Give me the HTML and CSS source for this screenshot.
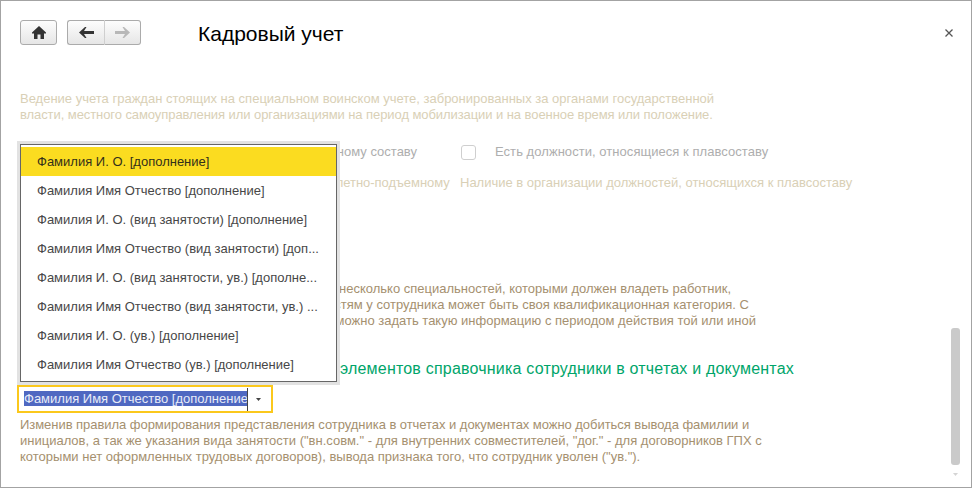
FILE: index.html
```html
<!DOCTYPE html>
<html lang="ru">
<head>
<meta charset="utf-8">
<title>Кадровый учет</title>
<link rel="stylesheet" href="styles.css">
</head>
<body>
<div class="window">
  <header class="header">
    <button class="btn btn-home" type="button" aria-label="Главная">
      <svg width="14" height="13" viewBox="0 0 14 13"><path d="M7 0 L14 6.5 V7.5 H12 V13 H8.5 V8.5 H5.5 V13 H2 V7.5 H0 V6.5 Z" fill="#333"/></svg>
    </button>
    <div class="btn-group">
      <button class="btn btn-nav" type="button" aria-label="Назад">
        <svg width="15" height="11" viewBox="0 0 15 11"><path d="M6 0 H7.5 L5 4 H15 V7 H5 L7.5 11 H6 L0 5.5 Z" fill="#333"/></svg>
      </button>
      <button class="btn btn-nav" type="button" aria-label="Вперёд">
        <svg width="15" height="11" viewBox="0 0 15 11"><path d="M9 0 H7.5 L10 4 H0 V7 H10 L7.5 11 H9 L15 5.5 Z" fill="#b8b8b8"/></svg>
      </button>
    </div>
    <h1 class="title">Кадровый учет</h1>
    <svg class="close" width="8" height="8" viewBox="0 0 8 8"><path d="M0.5 0.5 L7.5 7.5 M7.5 0.5 L0.5 7.5" stroke="#555" stroke-width="1.3" fill="none"/></svg>
  </header>

  <main class="content">
    <p class="faded intro">Ведение учета граждан стоящих на специальном воинском учете, забронированных за органами государственной<br><span class="tight-a">власти, местного самоуправления или организациями на период мобилизации и на военное время или положение.</span></p>

    <div class="opt-row">
      <div class="opt-label opt-left">Есть должности, относящиеся к летному составу</div>
      <span class="checkbox"></span>
      <div class="opt-label wide-a">Есть должности, относящиеся к плавсоставу</div>
    </div>
    <div class="desc-row">
      <div class="faded desc-left">Наличие в организации должностей, относящихся к летно-подъемному</div>
      <div class="faded">Наличие в организации должностей, относящихся к плавсоставу</div>
    </div>

    <div class="body-text qual">
      <div class="line l1">В карточке должности можно указать несколько специальностей, которыми должен владеть работник,</div>
      <div class="line l2">при этом по специальностям у сотрудника может быть своя квалификационная категория. С</div>
      <div class="line l3">помощью кадрового документа можно задать такую информацию с периодом действия той или иной</div>
    </div>

    <h2 class="heading">Настройка элементов справочника сотрудники в отчетах и документах</h2>

    <div class="field">
      <span class="field-value"><span class="selected">Фамилия Имя Отчество [дополнение</span></span>
      <span class="field-button"><svg width="5" height="3" viewBox="0 0 5 3"><path d="M0 0 H5 L2.5 3 Z" fill="#444"/></svg></span>
    </div>

    <p class="body-text note"><span class="tight-b">Изменив правила формирования представления сотрудника в отчетах и документах можно добиться вывода фамилии и</span><br>инициалов, а так же указания вида занятости ("вн.совм." - для внутренних совместителей, "дог." - для договорников ГПХ с<br>которыми нет оформленных трудовых договоров), вывода признака того, что сотрудник уволен ("ув.").</p>
  </main>

  <ul class="menu">
    <li class="item active">Фамилия И. О. [дополнение]</li>
    <li class="item">Фамилия Имя Отчество [дополнение]</li>
    <li class="item">Фамилия И. О. (вид занятости) [дополнение]</li>
    <li class="item">Фамилия Имя Отчество (вид занятости) [доп...</li>
    <li class="item">Фамилия И. О. (вид занятости, ув.) [дополне...</li>
    <li class="item">Фамилия Имя Отчество (вид занятости, ув.) ...</li>
    <li class="item">Фамилия И. О. (ув.) [дополнение]</li>
    <li class="item">Фамилия Имя Отчество (ув.) [дополнение]</li>
  </ul>

  <div class="scrollbar">
    <span class="thumb"></span>
    <svg class="scroll-arrow" width="5" height="3" viewBox="0 0 5 3"><path d="M0 0 H5 L2.5 3 Z" fill="#d4d4d4"/></svg>
  </div>
</div>
</body>
</html>
```

FILE: styles.css
```css
* { box-sizing: border-box; }
html, body { margin: 0; padding: 0; background: #fff; }
body { font-family: "Liberation Sans", Arial, sans-serif; font-size: 13px; }

.window {
  position: relative;
  width: 972px;
  height: 488px;
  border: 1px solid #a3a3a3;
  background: #fff;
  overflow: hidden;
}

.header {
  display: flex;
  align-items: center;
  height: 25px;
  margin: 19px 0 0 19px;
}
.btn {
  display: flex;
  align-items: center;
  justify-content: center;
  height: 25px;
  padding: 0;
  border: 1px solid #ababab;
  border-radius: 3px;
  background: linear-gradient(#fdfdfd, #e6e6e6);
}
.btn-home { width: 37px; }
.btn-group { display: flex; margin-left: 10px; }
.btn-nav { width: 37px; }
.btn-nav:first-child { border-radius: 3px 0 0 3px; border-right: 0; }
.btn-nav:last-child { border-radius: 0 3px 3px 0; border-left: 1px solid #cfcfcf; }
.title {
  margin: 2px 0 0 57px;
  font-size: 21px;
  font-weight: 400;
  color: #000;
}
.close { margin-left: auto; margin-right: 18px; margin-top: 1px; }

.content { padding: 0 0 0 19px; width: 930px; }
.faded { color: #d9d0b6; }
.intro { margin: 46px 0 0; line-height: 16px; white-space: nowrap; }
.tight-a { letter-spacing: -0.075px; }
.tight-b { letter-spacing: -0.045px; }
.wide-a { letter-spacing: 0.05px; }

.opt-row {
  display: flex;
  align-items: center;
  height: 16px;
  margin-top: 21px;
  line-height: 16px;
  white-space: nowrap;
}
.opt-label { color: #aeaeae; }
.opt-left { width: 397px; text-align: right; }
.checkbox {
  flex: none;
  width: 15px;
  height: 15px;
  margin: 0 19px 0 44px;
  border: 1px solid #cfcfcf;
  border-radius: 3px;
  background: #fff;
}
.desc-row {
  display: flex;
  gap: 10px;
  margin-top: 15px;
  line-height: 16px;
  white-space: nowrap;
}
.desc-left { width: 430px; letter-spacing: -0.03px; }

.body-text { color: #a5906f; line-height: 16px; }
.qual { margin-top: 90px; }
.line { text-align: right; white-space: nowrap; }
.l1 { width: 711px; }
.l2 { width: 729px; }
.l3 { width: 736px; }

.heading {
  width: 774px;
  margin: 30px 0 0;
  font-size: 16px;
  font-weight: 400;
  line-height: 20px;
  letter-spacing: 0.2px;
  text-align: right;
  white-space: nowrap;
  color: #00a56a;
}

.field {
  display: flex;
  align-items: center;
  width: 256px;
  height: 28px;
  margin: 6px 0 0 -3px;
  border: 2px solid #fbc81c;
  padding-left: 5px;
}
.field-value {
  flex: none;
  width: 224px;
  height: 23px;
  padding-top: 3px;
  overflow: hidden;
  white-space: nowrap;
  border-right: 1px solid #444;
  line-height: 16px;
}
.selected { background: #4f68c1; color: #e8ecf8; }
.field-button { display: flex; justify-content: center; width: 21px; }

.note { margin: 4px 0 0; white-space: nowrap; }

.menu {
  position: absolute;
  left: 19px;
  top: 143px;
  width: 317px;
  margin: 0;
  padding: 2px 0;
  list-style: none;
  background: #fff;
  border: 1px solid #666;
  box-shadow: 0 0 0 3px #e2e2e2;
}
.item {
  height: 29px;
  padding: 0 0 0 16px;
  line-height: 29px;
  color: #474747;
  white-space: nowrap;
}
.active { background: #fbdc20; color: #33301a; }

.scrollbar {
  position: absolute;
  left: 949px;
  top: 327px;
  display: flex;
  flex-direction: column;
  align-items: center;
  width: 10px;
}
.thumb {
  width: 9px;
  height: 137px;
  border-radius: 3px;
  background: #cacaca;
}
.scroll-arrow { margin-top: 8px; }
```
